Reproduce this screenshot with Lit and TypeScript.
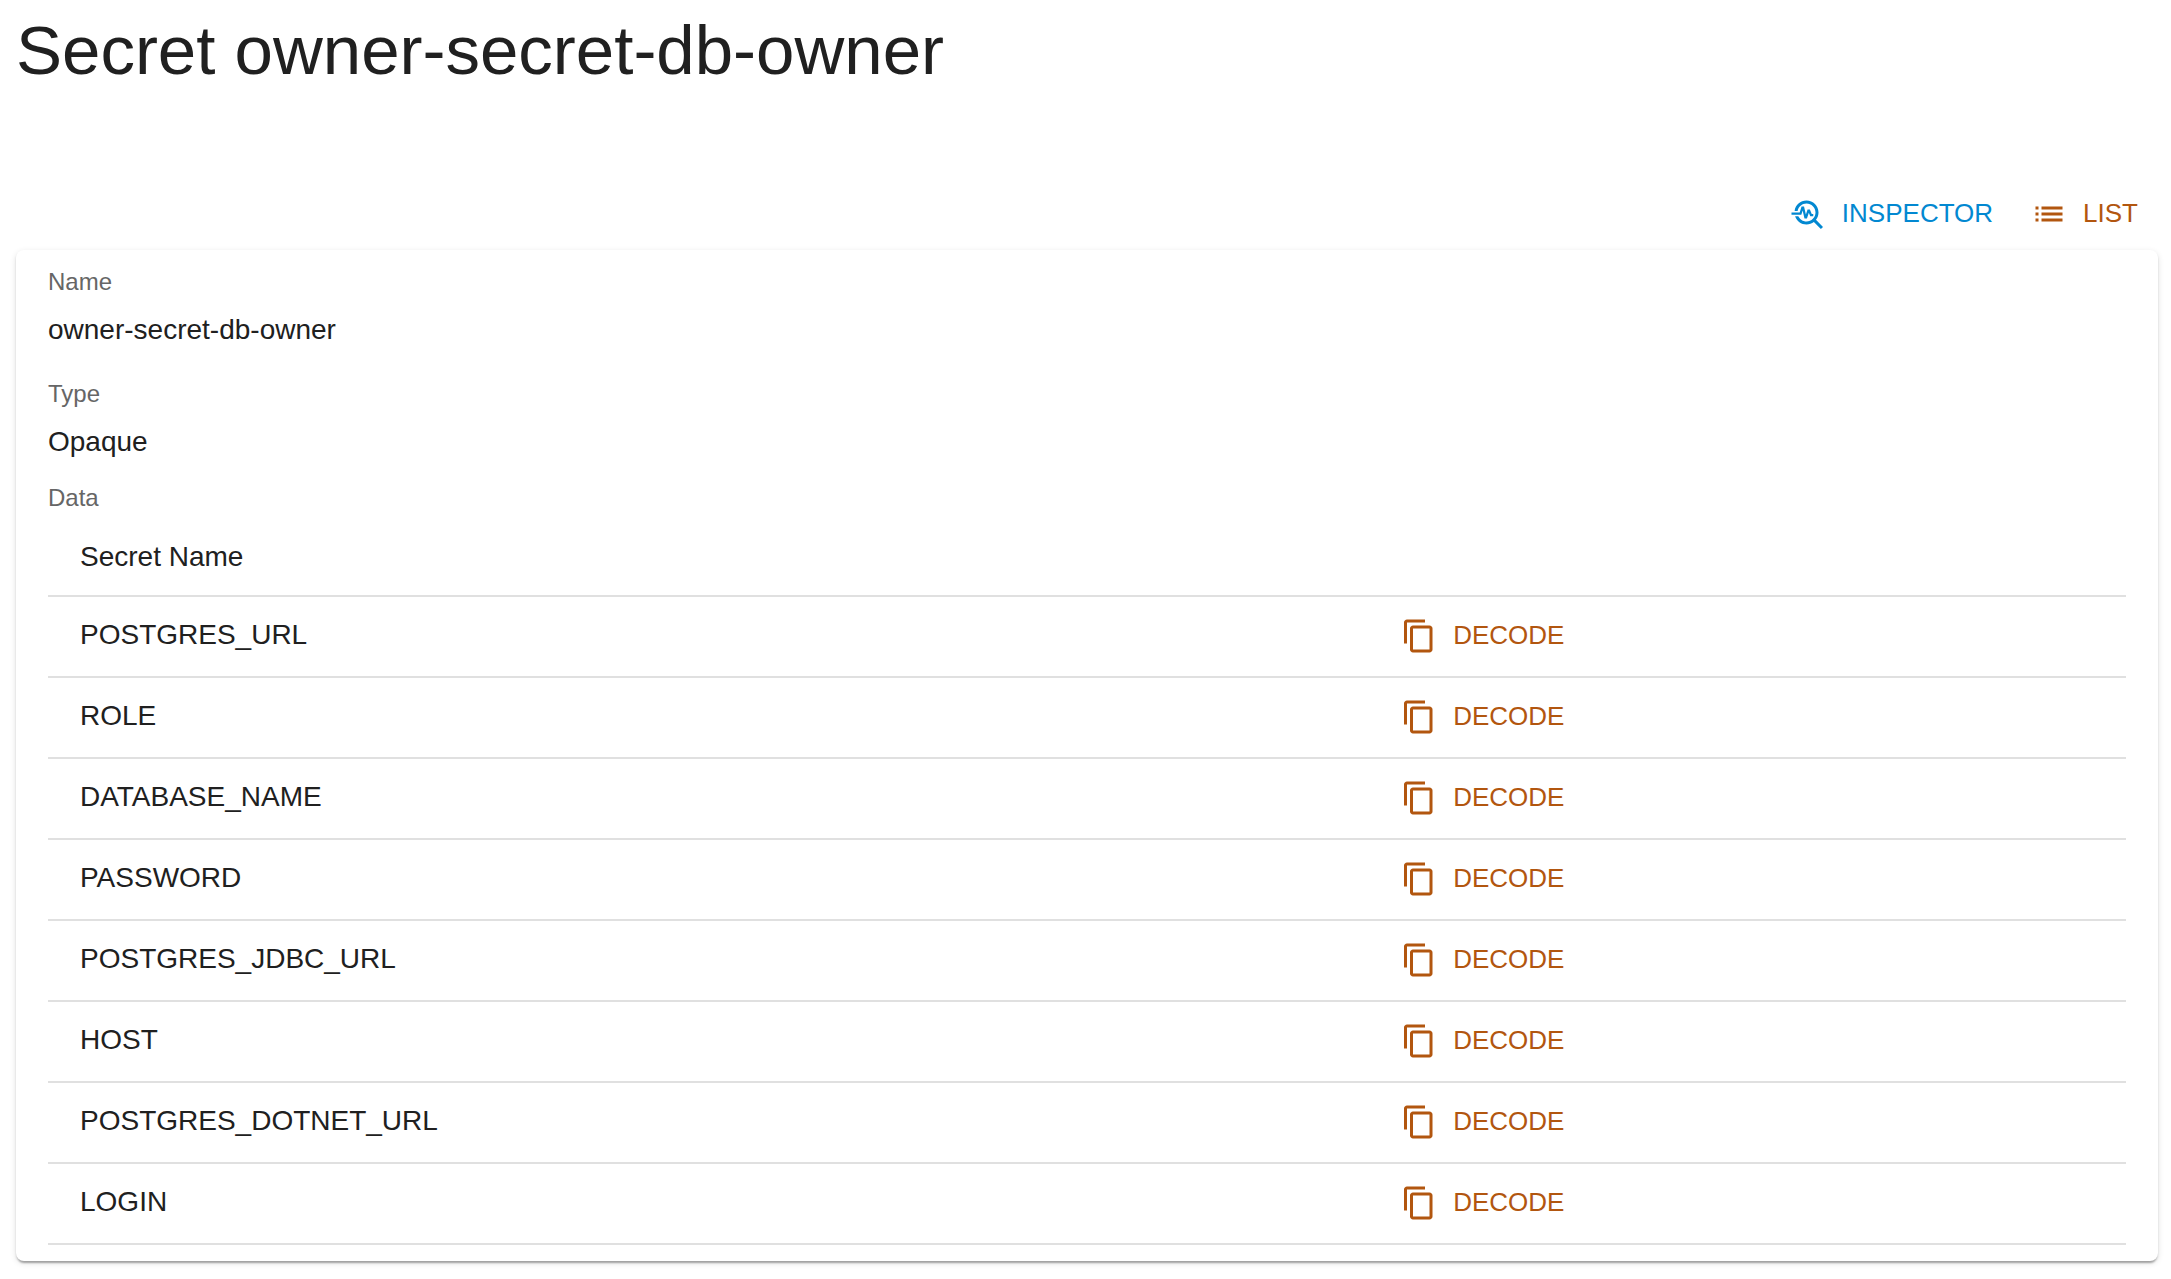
import { LitElement, html, svg, css } from "lit";
import { customElement, property, state } from "lit/decorators.js";

interface SecretField {
  label: string;
  value: string;
}

const inspectorIcon = svg`
  <path d="M22 20.59l-4.69-4.69C18.37 14.55 19 12.85 19 11c0-4.42-3.58-8-8-8-4.08 0-7.44 3.05-7.93 7h2.02C5.57 7.17 8.03 5 11 5c3.31 0 6 2.69 6 6s-2.69 6-6 6c-2.42 0-4.5-1.44-5.45-3.5H3.4C4.45 16.69 7.46 19 11 19c1.85 0 3.55-.63 4.9-1.69L20.59 22 22 20.59z"/>
  <path d="M8.43 9.69 9.65 15h1.64l1.26-3.78.95 2.28h2V12h-1l-1.25-3h-1.54l-1.12 3.37L9.35 7H7.7l-1.25 4H1v1.5h6.55l.88-2.81z"/>`;

const listIcon = svg`
  <path d="M3 13h2v-2H3v2zm0 4h2v-2H3v2zm0-8h2V7H3v2zm4 4h14v-2H7v2zm0 4h14v-2H7v2zM7 7v2h14V7H7z"/>`;

const copyIcon = svg`
  <path d="M16 1H4c-1.1 0-2 .9-2 2v14h2V3h12V1zm3 4H8c-1.1 0-2 .9-2 2v14c0 1.1.9 2 2 2h11c1.1 0 2-.9 2-2V7c0-1.1-.9-2-2-2zm0 16H8V7h11v14z"/>`;

@customElement("toolbar-link")
export class ToolbarLink extends LitElement {
  @property() label = "";
  @property() icon: "inspector" | "list" = "list";

  static styles = css`
    :host {
      display: block;
    }
    .link {
      display: flex;
      align-items: center;
      gap: 16px;
      padding: 8px 12px;
      border-radius: 8px;
      color: #b2560f;
      font-size: 26px;
      line-height: 44px;
      text-decoration: none;
      text-transform: uppercase;
    }
    .link.inspector {
      color: #0288d1;
    }
    .text {
      padding-bottom: 2px;
      line-height: 42px;
    }
    .icon {
      width: 36px;
      height: 36px;
      fill: currentColor;
    }
  `;

  render() {
    return html`<a class="link ${this.icon}" href="#${this.icon}">
      <svg class="icon" viewBox="0 0 24 24" aria-hidden="true">
        ${this.icon === "inspector" ? inspectorIcon : listIcon}
      </svg>
      <span class="text">${this.label}</span>
    </a>`;
  }
}

@customElement("app-root")
export class AppRoot extends LitElement {
  @state() private fields: SecretField[] = [
    { label: "Name", value: "owner-secret-db-owner" },
    { label: "Type", value: "Opaque" },
  ];

  @state() private keys = [
    "POSTGRES_URL",
    "ROLE",
    "DATABASE_NAME",
    "PASSWORD",
    "POSTGRES_JDBC_URL",
    "HOST",
    "POSTGRES_DOTNET_URL",
    "LOGIN",
  ];

  static styles = css`
    :host {
      display: block;
      background: #fff;
      color: #202020;
      font-family: "Liberation Sans", Arial, sans-serif;
      font-size: 28px;
      line-height: 40px;
    }
    .page {
      padding: 8px 13px 16px 16px;
    }
    .title {
      margin: 0;
      font-size: 69px;
      font-weight: 400;
      line-height: 86px;
    }
    .toolbar {
      display: flex;
      justify-content: flex-end;
      gap: 14px;
      padding: 90px 8px 6px;
    }
    .card {
      padding: 16px 32px;
      border-radius: 8px;
      background: #fff;
      box-shadow:
        0 4px 2px -2px rgba(0, 0, 0, 0.2),
        0 2px 2px 0 rgba(0, 0, 0, 0.14),
        0 2px 6px 0 rgba(0, 0, 0, 0.12);
    }
    .fields {
      display: grid;
      gap: 16px;
      margin: 0 0 8px;
    }
    .label {
      color: #666;
      font-size: 24px;
      line-height: 32px;
    }
    .value {
      margin: 0;
      padding: 12px 0;
      line-height: 40px;
    }
    .table {
      width: 100%;
      margin-top: 4px;
      border-collapse: separate;
      border-spacing: 0;
      table-layout: fixed;
    }
    .cell {
      box-sizing: border-box;
      height: 81px;
      padding: 0 32px 2px;
      border-bottom: 2px solid #e0e0e0;
      font-weight: 400;
      text-align: left;
      vertical-align: middle;
    }
    .cell.key {
      width: 63%;
      padding-bottom: 4px;
    }
    .cell.head {
      height: 79px;
      padding-bottom: 0;
    }
    .decode {
      display: flex;
      align-items: center;
      gap: 16px;
      padding: 8px 12px;
      border: 0;
      border-radius: 8px;
      background: none;
      color: #b2560f;
      font: inherit;
      font-size: 26px;
      line-height: 44px;
      text-transform: uppercase;
      cursor: pointer;
    }
    .text {
      padding-bottom: 2px;
      line-height: 42px;
    }
    .icon {
      width: 36px;
      height: 36px;
      fill: currentColor;
    }
  `;

  render() {
    return html`
      <main class="page">
        <h1 class="title">Secret owner-secret-db-owner</h1>
        <nav class="toolbar">
          <toolbar-link icon="inspector" label="Inspector"></toolbar-link>
          <toolbar-link icon="list" label="List"></toolbar-link>
        </nav>
        <section class="card">
          <dl class="fields">
            ${this.fields.map(
              (f) => html`<div>
                <dt class="label">${f.label}</dt>
                <dd class="value">${f.value}</dd>
              </div>`,
            )}
          </dl>
          <div class="label" id="data-label">Data</div>
          <table class="table" aria-labelledby="data-label">
            <thead>
              <tr>
                <th class="cell key head" scope="col">Secret Name</th>
                <td class="cell head"></td>
              </tr>
            </thead>
            <tbody>
              ${this.keys.map(
                (key) => html`<tr>
                  <td class="cell key">${key}</td>
                  <td class="cell">
                    <button class="decode" type="button">
                      <svg class="icon" viewBox="0 0 24 24" aria-hidden="true">
                        ${copyIcon}
                      </svg>
                      <span class="text">Decode</span>
                    </button>
                  </td>
                </tr>`,
              )}
            </tbody>
          </table>
        </section>
      </main>
    `;
  }
}
